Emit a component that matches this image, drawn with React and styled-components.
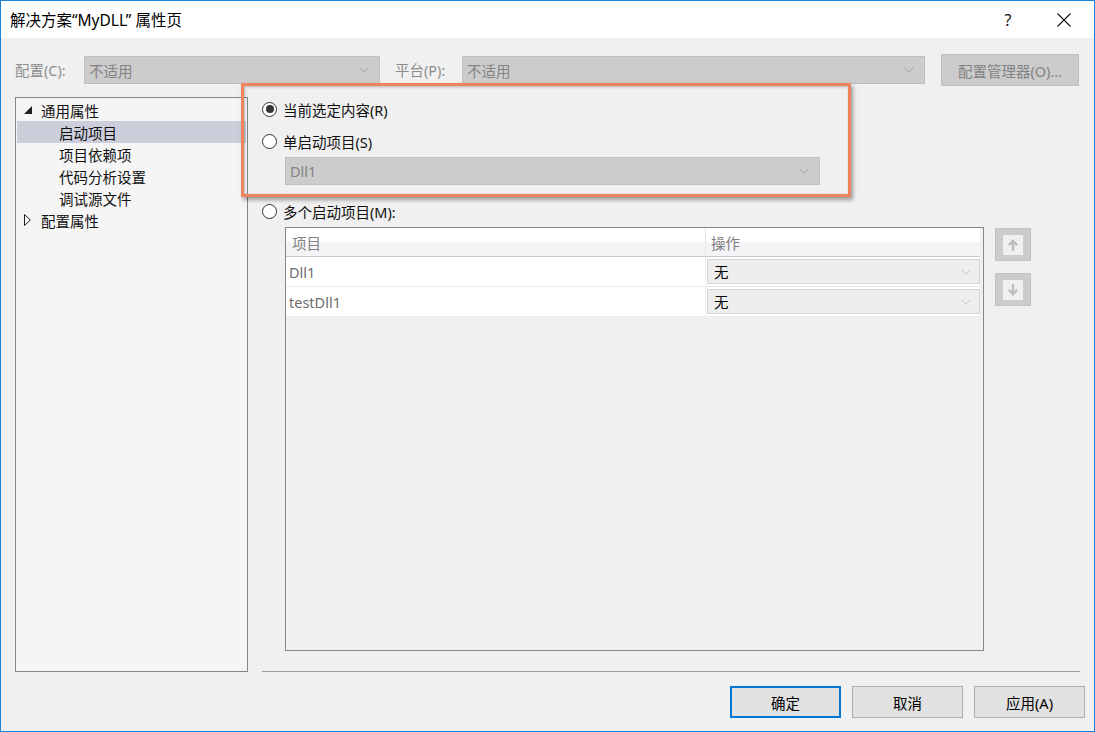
import React from "react";
import styled, { createGlobalStyle } from "styled-components";

const GlobalStyle = createGlobalStyle`
  html, body {
    margin: 0;
    padding: 0;
    background: #ffffff;
  }
  * {
    box-sizing: border-box;
  }
  body {
    font-family: "Noto Sans", "Noto Sans CJK SC", sans-serif;
    font-size: 14.5px;
  }
`;

const Window = styled.div`
  position: relative;
  width: 1095px;
  height: 732px;
  border: 1px solid #1883d7;
  background: #f0f0f0;
  display: flex;
  flex-direction: column;
  overflow: hidden;
`;

const TitleBar = styled.div`
  height: 37px;
  background: #ffffff;
  display: flex;
  align-items: center;
  padding-left: 9px;
  padding-right: 10px;
  flex-shrink: 0;
`;

const Title = styled.div`
  flex: 1;
  font-size: 15.5px;
  color: #000000;
  line-height: 20px;
`;

const TitleButton = styled.div`
  width: 40px;
  display: flex;
  justify-content: center;
  align-items: center;
  margin-left: ${(p) => p.$gap || 0}px;
  font-size: 16px;
  color: #111;
`;

const Body = styled.div`
  flex: 1;
  display: flex;
  flex-direction: column;
`;

const ConfigRow = styled.div`
  display: flex;
  align-items: center;
  padding: 16px 0 0 14px;
  height: 48px;
`;

const Label = styled.div`
  width: ${(p) => p.$w}px;
  margin-left: ${(p) => p.$ml || 0}px;
  color: #8d8d8d;
  font-size: 14.5px;
  line-height: 20px;
`;

const DisabledSelect = styled.div`
  width: ${(p) => p.$w}px;
  height: ${(p) => p.$h || 28}px;
  margin-left: ${(p) => p.$ml || 0}px;
  margin-top: ${(p) => p.$mt || 0}px;
  background: #cccccc;
  border: 1px solid #bfbfbf;
  display: flex;
  align-items: center;
  justify-content: space-between;
  padding: 0 10px 0 4px;
  color: #838383;
  font-size: 14.5px;
  flex-shrink: 0;
`;

const DisabledButton = styled.div`
  width: 138px;
  height: 32px;
  margin-left: 16px;
  background: #cccccc;
  border: 1px solid #bfbfbf;
  color: #838383;
  display: flex;
  align-items: center;
  justify-content: center;
  font-size: 14.5px;
`;

const Main = styled.div`
  display: flex;
  padding: 11px 0 0 14px;
`;

const Tree = styled.div`
  width: 233px;
  height: 575px;
  border: 1px solid #828790;
  background: #f5f5f5;
  padding: 1px 1px 0 1px;
  flex-shrink: 0;
`;

const TreeItem = styled.div`
  height: 22px;
  display: flex;
  align-items: center;
  padding-left: ${(p) => (p.$child ? 42 : 7)}px;
  background: ${(p) => (p.$selected ? "#cccedb" : "transparent")};
  color: #111111;
  font-size: 14.5px;
`;

const Expander = styled.span`
  width: 17px;
  display: flex;
  align-items: center;
`;

const Right = styled.div`
  margin-left: 14px;
  width: 818px;
  display: flex;
  flex-direction: column;
  padding-top: 1px;
`;

const RadioRow = styled.div`
  height: 22px;
  display: flex;
  align-items: center;
  margin-top: ${(p) => p.$mt || 0}px;
  color: #111111;
  font-size: 14.5px;
`;

const RadioCircle = styled.span`
  width: 15px;
  height: 15px;
  border-radius: 50%;
  border: 1px solid #333333;
  background: #ffffff;
  display: flex;
  align-items: center;
  justify-content: center;
  margin-right: 6px;
  &::after {
    content: "";
    width: 8px;
    height: 8px;
    border-radius: 50%;
    background: ${(p) => (p.$checked ? "#333333" : "transparent")};
  }
`;

const GridRow = styled.div`
  display: flex;
  margin-top: 5px;
  margin-left: 23px;
`;

const Grid = styled.div`
  width: 699px;
  height: 424px;
  border: 1px solid #828790;
  background: #f0f0f0;
  padding-right: 3px;
`;

const GridHeader = styled.div`
  height: 29px;
  display: flex;
  background: linear-gradient(#ffffff 0%, #ffffff 45%, #f4f4f6 55%, #f4f4f6 100%);
  border-bottom: 1px solid #c9c9cd;
`;

const HeaderCell = styled.div`
  width: ${(p) => p.$w}px;
  padding-left: ${(p) => p.$pl}px;
  display: flex;
  align-items: center;
  color: #808080;
  font-size: 14.5px;
  border-right: ${(p) => (p.$divider ? "1px solid #e6e6e6" : "none")};
`;

const GridDataRow = styled.div`
  height: 30px;
  display: flex;
  background: #ffffff;
  border-bottom: 1px solid #ececec;
`;

const NameCell = styled.div`
  width: 420px;
  padding-left: 3px;
  display: flex;
  align-items: center;
  color: #6d6d6d;
  font-size: 14.5px;
  border-right: 1px solid #f0f0f0;
`;

const ActionCell = styled.div`
  flex: 1;
  padding: 2px 0 2px 1px;
`;

const ActionSelect = styled.div`
  height: 25px;
  background: #eeeeee;
  border: 1px solid #d5d5d5;
  display: flex;
  align-items: center;
  justify-content: space-between;
  padding: 0 8px 0 6px;
  color: #000000;
  font-size: 14.5px;
`;

const SideButtons = styled.div`
  display: flex;
  flex-direction: column;
  gap: 12px;
  margin-left: 11px;
  margin-top: 1px;
`;

const MoveButton = styled.div`
  width: 36px;
  height: 33px;
  background: #cccccc;
  border: 1px solid #c2c2c2;
  display: flex;
  align-items: center;
  justify-content: center;
`;

const MoveInner = styled.div`
  width: 20px;
  height: 20px;
  background: #f0f0f0;
  display: flex;
  align-items: center;
  justify-content: center;
`;

const Separator = styled.div`
  margin-top: 20px;
  height: 1px;
  background: #a0a0a0;
`;

const Footer = styled.div`
  display: flex;
  justify-content: flex-end;
  gap: 11px;
  padding: 14px 9px 0 0;
`;

const DialogButton = styled.div`
  width: 111px;
  height: 32px;
  background: #e1e1e1;
  border: ${(p) => (p.$default ? "2px solid #0078d7" : "1px solid #adadad")};
  display: flex;
  align-items: center;
  justify-content: center;
  color: #000000;
  font-size: 14.5px;
`;

const Highlight = styled.div`
  position: absolute;
  left: 240px;
  top: 82px;
  width: 610px;
  height: 114px;
  border: 3px solid #f0845f;
  box-shadow: 2px 3px 4px rgba(0, 0, 0, 0.35), inset 1px 1px 3px rgba(0, 0, 0, 0.25);
  pointer-events: none;
`;

const Chevron = ({ color = "#a0a0a0" }) => (
  <svg width="10" height="6" viewBox="0 0 10 6">
    <polyline points="0.5,0.7 5,5.2 9.5,0.7" fill="none" stroke={color} strokeWidth="1" />
  </svg>
);

const Arrow = ({ down }) => (
  <svg width="12" height="14" viewBox="0 0 12 14" style={down ? { transform: "rotate(180deg)" } : undefined}>
    <path d="M6 1 L11 6.5 L9.3 8 L7.2 5.8 L7.2 13 L4.8 13 L4.8 5.8 L2.7 8 L1 6.5 Z" fill="#bdbdbd" />
  </svg>
);

const items = [
  { text: "启动项目", selected: true },
  { text: "项目依赖项" },
  { text: "代码分析设置" },
  { text: "调试源文件" },
];

const projects = ["Dll1", "testDll1"];

export default function App() {
  return (
    <>
      <GlobalStyle />
      <Window>
        <TitleBar>
          <Title>解决方案“MyDLL” 属性页</Title>
          <TitleButton>?</TitleButton>
          <TitleButton $gap={16}>
            <svg width="14" height="14" viewBox="0 0 14 14">
              <path d="M0.5 0.5 L13.5 13.5 M13.5 0.5 L0.5 13.5" stroke="#111" strokeWidth="1.1" />
            </svg>
          </TitleButton>
        </TitleBar>
        <Body>
          <ConfigRow>
            <Label $w={69}>配置(C):</Label>
            <DisabledSelect $w={296}>
              不适用
              <Chevron />
            </DisabledSelect>
            <Label $w={67} $ml={15}>平台(P):</Label>
            <DisabledSelect $w={463}>
              不适用
              <Chevron />
            </DisabledSelect>
            <DisabledButton>配置管理器(O)...</DisabledButton>
          </ConfigRow>
          <Main>
            <Tree>
              <TreeItem>
                <Expander>
                  <svg width="8" height="8" viewBox="0 0 8 8">
                    <polygon points="8,0 8,8 0,8" fill="#1e1e1e" />
                  </svg>
                </Expander>
                通用属性
              </TreeItem>
              {items.map((it) => (
                <TreeItem key={it.text} $child $selected={it.selected}>
                  {it.text}
                </TreeItem>
              ))}
              <TreeItem>
                <Expander>
                  <svg width="7" height="12" viewBox="0 0 7 12">
                    <polygon points="0.5,0.5 6.3,6 0.5,11.5" fill="none" stroke="#1e1e1e" strokeWidth="1" />
                  </svg>
                </Expander>
                配置属性
              </TreeItem>
            </Tree>
            <Right>
              <RadioRow>
                <RadioCircle $checked />
                当前选定内容(R)
              </RadioRow>
              <RadioRow $mt={10}>
                <RadioCircle />
                单启动项目(S)
              </RadioRow>
              <DisabledSelect $w={535} $ml={23} $mt={5}>
                Dll1
                <Chevron />
              </DisabledSelect>
              <RadioRow $mt={15}>
                <RadioCircle />
                多个启动项目(M):
              </RadioRow>
              <GridRow>
                <Grid>
                  <GridHeader>
                    <HeaderCell $w={420} $pl={6} $divider>
                      项目
                    </HeaderCell>
                    <HeaderCell $w={270} $pl={5}>
                      操作
                    </HeaderCell>
                  </GridHeader>
                  {projects.map((p) => (
                    <GridDataRow key={p}>
                      <NameCell>{p}</NameCell>
                      <ActionCell>
                        <ActionSelect>
                          无
                          <Chevron color="#c4c4c4" />
                        </ActionSelect>
                      </ActionCell>
                    </GridDataRow>
                  ))}
                </Grid>
                <SideButtons>
                  <MoveButton>
                    <MoveInner>
                      <Arrow />
                    </MoveInner>
                  </MoveButton>
                  <MoveButton>
                    <MoveInner>
                      <Arrow down />
                    </MoveInner>
                  </MoveButton>
                </SideButtons>
              </GridRow>
              <Separator />
            </Right>
          </Main>
          <Footer>
            <DialogButton $default>确定</DialogButton>
            <DialogButton>取消</DialogButton>
            <DialogButton>应用(A)</DialogButton>
          </Footer>
        </Body>
        <Highlight />
      </Window>
    </>
  );
}
